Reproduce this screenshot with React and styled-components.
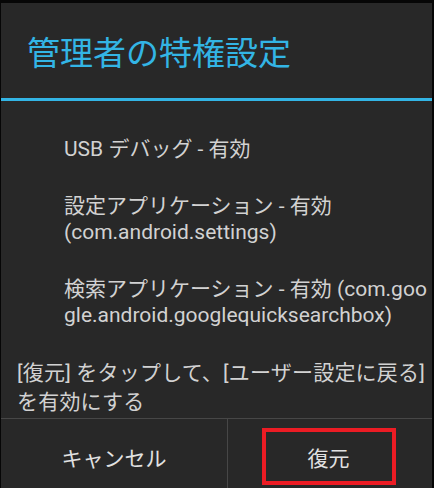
import React from "react"
import styled, { createGlobalStyle } from "styled-components"

const GlobalStyle = createGlobalStyle`
  html, body {
    margin: 0;
    padding: 0;
    background: #060606;
  }
  body {
    width: 434px;
    height: 488px;
    overflow: hidden;
    font-family: Roboto, "Noto Sans CJK JP", sans-serif;
  }
`

const StyledDialog = styled.div`
  margin: 3px 2px 0 1px;
  height: 485px;
  overflow: hidden;
  background: #282828;
  display: flex;
  flex-direction: column;
`

const StyledHeader = styled.header`
  height: 98px;
  padding: 7px 0 0 26px;
  box-sizing: border-box;
  display: flex;
  align-items: center;
  border-bottom: 3px solid #33b5e5;
  flex-shrink: 0;
`

const StyledTitle = styled.h1`
  margin: 0;
  font-size: 33px;
  font-weight: 400;
  line-height: 36px;
  color: #33b5e5;
`

const StyledBody = styled.div`
  padding: 35px 0 0;
  display: flex;
  flex-direction: column;
  gap: 31px;
  color: #d2d2d2;
  font-size: 21px;
`

const StyledItem = styled.div`
  padding-left: 63px;
  line-height: 26px;
  white-space: nowrap;
`

const StyledNote = styled.p`
  margin: 0;
  padding-left: 16px;
  line-height: 29px;
  letter-spacing: 0.2px;
  white-space: nowrap;
`

const StyledButtonBar = styled.div`
  margin-top: 1px;
  flex: 1;
  display: grid;
  grid-template-columns: 226px 1fr;
  border-top: 1px solid #474747;
`

const StyledButton = styled.div`
  padding-top: 9px;
  display: flex;
  align-items: flex-start;
  justify-content: center;
  font-size: 21px;
  color: #e2e2e2;
  & + & {
    border-left: 1px solid #474747;
  }
`

const StyledLabel = styled.span`
  box-sizing: border-box;
  width: 134px;
  height: 57px;
  display: flex;
  align-items: center;
  justify-content: center;
  border: 4px solid ${({ $highlight }) => ($highlight ? "#ec1c24" : "transparent")};
  margin-left: ${({ $highlight }) => ($highlight ? "-3px" : "0")};
`

export default () => (
  <>
    <GlobalStyle />
    <StyledDialog>
      <StyledHeader>
        <StyledTitle>管理者の特権設定</StyledTitle>
      </StyledHeader>

      <StyledBody>
        <StyledItem>USB デバッグ - 有効</StyledItem>
        <StyledItem>
          設定アプリケーション - 有効
          <br />
          (com.android.settings)
        </StyledItem>
        <StyledItem>
          検索アプリケーション - 有効 (com.goo
          <br />
          gle.android.googlequicksearchbox)
        </StyledItem>
        <StyledNote>
          [復元] をタップして、[ユーザー設定に戻る]
          <br />
          を有効にする
        </StyledNote>
      </StyledBody>

      <StyledButtonBar>
        <StyledButton>
          <StyledLabel>キャンセル</StyledLabel>
        </StyledButton>
        <StyledButton>
          <StyledLabel $highlight>復元</StyledLabel>
        </StyledButton>
      </StyledButtonBar>
    </StyledDialog>
  </>
)
